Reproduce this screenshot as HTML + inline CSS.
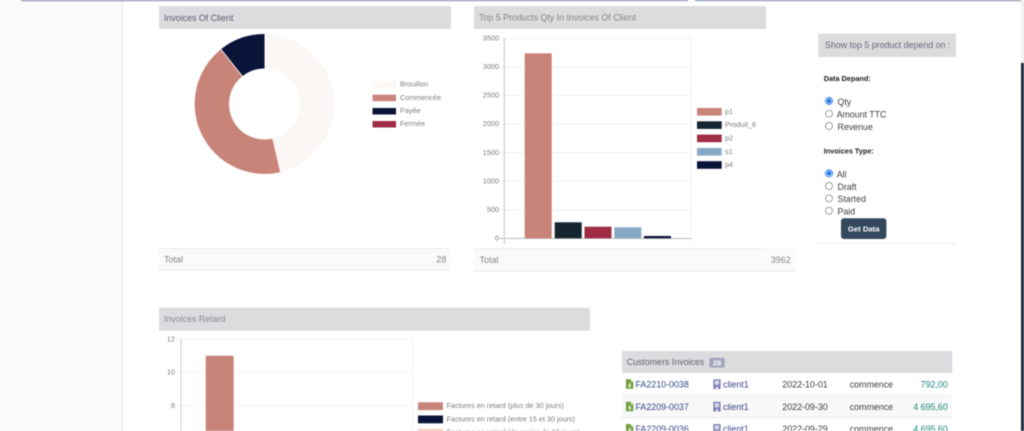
<!DOCTYPE html>
<html lang="en">
<head>
<meta charset="utf-8">
<title>Invoices Of Client</title>
<style>
html,body{margin:0;padding:0;width:1024px;height:431px;overflow:hidden;background:#fff}
svg{display:block;position:absolute;left:0;top:0;filter:blur(.4px)}
text{font-family:"Liberation Sans",sans-serif}
.h{font-size:8.85px;fill:#64647a}
.l{font-size:7.25px;fill:#7c7c7c}
.a{font-size:7.3px;fill:#7c7c7c;text-anchor:end}
.t{font-size:9px;fill:#858585}
.b{font-size:7.3px;font-weight:bold;fill:#1c1c1c}
.r{font-size:8.8px;fill:#3c3c3c}
.c{font-size:8.9px;fill:#3c3c3c}
.k{font-size:8.9px;fill:#3a4588}
.m{font-size:8.9px;fill:#1a8678;text-anchor:end}
</style>
</head>
<body>
<svg width="1024" height="431" viewBox="0 0 1024 431" xmlns="http://www.w3.org/2000/svg">
<defs>
<g id="f"><path d="M0 0h4.6l2.7 2.7v6.8H0z" fill="#6f9e3f"/><path d="M4.6 0v2.7h2.7z" fill="#b8d29a"/><rect x="2.6" y="4" width="2.2" height="4" fill="#dfeccd"/></g>
<g id="d"><path d="M0 0h7.3v9.7H0z" fill="#7f7fb5"/><path d="M1.5 1.3h4.3v4.2H1.5z" fill="#d9d9ec"/><rect x="2.7" y="7.2" width="1.9" height="2.5" fill="#e6e6f2"/></g>
</defs>

<!-- page chrome -->
<rect x="0" y="0" width="122" height="431" fill="#fbfbfb"/>
<rect x="122" y="0" width="1" height="431" fill="#e6e6e6"/>
<rect x="21" y="0" width="667" height="1.2" fill="#8a94ae"/>
<rect x="695" y="0" width="327" height="1.2" fill="#8a94ae"/>
<rect x="1021" y="0" width="3" height="63" fill="#f1f1f1"/>
<rect x="1021" y="63" width="3" height="368" fill="#1e2a3a"/>

<!-- panel 1 -->
<rect x="159" y="6" width="292" height="23" fill="#dcdcdf"/>
<text x="164" y="21" class="h" style="fill:#5c5c74">Invoices Of Client</text>
<path d="M264.5 34A70 70 0 0 1 280.1 172.2L272.4 138.6A35.5 35.5 0 0 0 264.5 68.5Z" fill="#fbf7f4"/>
<path d="M280.1 172.2A70 70 0 0 1 220.9 49.3L242.4 76.2A35.5 35.5 0 0 0 272.4 138.6Z" fill="#c9847a"/>
<path d="M220.9 49.3A70 70 0 0 1 264.5 34V68.5A35.5 35.5 0 0 0 242.4 76.2Z" fill="#0a1338"/>
<path d="M220.9 49.3L242.4 76.2" stroke="#fff" stroke-width=".8"/>
<rect x="372.5" y="81.5" width="23.5" height="6.5" fill="#fbf7f4"/>
<rect x="372.5" y="94.7" width="23.5" height="6.5" fill="#c9847a"/>
<rect x="372.5" y="108" width="23.5" height="6.5" fill="#0a1338"/>
<rect x="372.5" y="121" width="23.5" height="6.5" fill="#a02c44"/>
<text x="400" y="86.5" class="l">Brouillon</text>
<text x="400" y="99.8" class="l">Commencée</text>
<text x="400" y="112.8" class="l">Payée</text>
<text x="400" y="126" class="l">Fermée</text>
<rect x="159" y="248" width="292" height="22.5" fill="#fafafa"/>
<rect x="159" y="248" width="292" height=".8" fill="#e6e6e6"/>
<rect x="159" y="270" width="292" height=".8" fill="#e6e6e6"/>
<text x="164" y="262.5" class="t">Total</text>
<text x="446.5" y="262.5" class="t" text-anchor="end">28</text>

<!-- panel 2 -->
<rect x="474" y="6" width="292" height="23" fill="#dcdcdd"/>
<text x="479" y="20.5" class="h" style="fill:#85858f">Top 5 Products Qty In Invoices Of Client</text>
<g stroke="#eeeeee" stroke-width=".8">
<path d="M499 38.4H691.3M499 67H691.3M499 95.5H691.3M499 124.1H691.3M499 152.7H691.3M499 181.2H691.3M499 209.8H691.3M691.3 38.4V244"/>
</g>
<path d="M504.3 38V244M500 238.5H691.5" stroke="#bdbdbd" stroke-width=".9" fill="none"/>
<rect x="524.7" y="53.3" width="27" height="185" fill="#c9847a"/>
<rect x="554.7" y="222.3" width="27" height="16" fill="#16252f"/>
<rect x="584.5" y="226.7" width="27" height="11.6" fill="#a02c44"/>
<rect x="614.3" y="227.3" width="27" height="11" fill="#87a8c4"/>
<rect x="644" y="236" width="27" height="2.3" fill="#0a1338"/>
<text x="499" y="40.5" class="a">3500</text>
<text x="499" y="69" class="a">3000</text>
<text x="499" y="97.6" class="a">2500</text>
<text x="499" y="126.2" class="a">2000</text>
<text x="499" y="154.8" class="a">1500</text>
<text x="499" y="183.3" class="a">1000</text>
<text x="499" y="211.9" class="a">500</text>
<text x="499" y="240.5" class="a">0</text>
<rect x="697" y="108" width="24.7" height="7.6" fill="#c9847a"/>
<rect x="697" y="121.3" width="24.7" height="7.6" fill="#16252f"/>
<rect x="697" y="134.6" width="24.7" height="7.6" fill="#a02c44"/>
<rect x="697" y="148" width="24.7" height="7.6" fill="#87a8c4"/>
<rect x="697" y="161.2" width="24.7" height="7.6" fill="#0a1338"/>
<text x="725" y="114" class="l">p1</text>
<text x="725" y="127" class="l">Produit_6</text>
<text x="725" y="140.5" class="l">p2</text>
<text x="725" y="154" class="l">s1</text>
<text x="725" y="167" class="l">p4</text>
<rect x="474" y="248" width="322" height="23.5" fill="#fafafa"/>
<rect x="474" y="248" width="292" height=".8" fill="#ececec"/>
<rect x="474" y="271" width="322" height=".8" fill="#e6e6e6"/>
<text x="479.5" y="263" class="t">Total</text>
<text x="790.8" y="263" class="t" text-anchor="end">3962</text>

<!-- panel 3 -->
<rect x="818.3" y="33.5" width="137.7" height="23.5" fill="#dcdcdd"/>
<text x="825" y="48" class="h">Show top 5 product depend on :</text>
<text x="823.7" y="81" class="b">Data Depand:</text>
<g fill="#fff" stroke="#767676" stroke-width=".7">
<circle cx="829" cy="113.7" r="3.5"/><circle cx="829" cy="126" r="3.5"/>
<circle cx="829" cy="186" r="3.5"/><circle cx="829" cy="198.3" r="3.5"/><circle cx="829" cy="210.7" r="3.5"/>
</g>
<g fill="#fff" stroke="#1a73e8" stroke-width=".9">
<circle cx="829" cy="101" r="3.5"/><circle cx="829" cy="173.3" r="3.5"/>
</g>
<circle cx="829" cy="101" r="2.3" fill="#1a73e8"/><circle cx="829" cy="173.3" r="2.3" fill="#1a73e8"/>
<text x="837.5" y="105" class="r">Qty</text>
<text x="836.7" y="117.5" class="r">Amount TTC</text>
<text x="837.5" y="130" class="r">Revenue</text>
<text x="823.7" y="153.5" class="b">Invoices Type:</text>
<text x="836.7" y="177.5" class="r">All</text>
<text x="837.5" y="189.8" class="r">Draft</text>
<text x="837.5" y="202" class="r">Started</text>
<text x="837.5" y="214.5" class="r">Paid</text>
<rect x="841" y="218.3" width="45.4" height="20.7" rx="3" fill="#34495e"/>
<text x="863.7" y="231.5" text-anchor="middle" style="font-size:7.7px;font-weight:bold;fill:#fff">Get Data</text>
<rect x="818.3" y="243" width="137.7" height=".8" fill="#e6e6e6"/>

<!-- panel 4 -->
<rect x="159" y="307.7" width="431" height="23" fill="#dcdcdf"/>
<text x="164" y="321.8" class="h" style="fill:#85858f">Invoices Retard</text>
<g stroke="#eeeeee" stroke-width=".8">
<path d="M176.5 339.2H412.7M176.5 372.4H412.7M176.5 405.6H412.7M412.7 339.2V431"/>
</g>
<path d="M181 339V431" stroke="#c8c8c8" stroke-width=".9"/>
<rect x="205.7" y="355.7" width="28" height="75.3" fill="#c9847a"/>
<text x="175" y="341.5" class="a">12</text>
<text x="175" y="374.7" class="a">10</text>
<text x="175" y="408" class="a">8</text>
<rect x="418" y="402.3" width="25" height="7.8" fill="#c9847a"/>
<rect x="418" y="415.5" width="25" height="7.8" fill="#0a1338"/>
<rect x="418" y="429" width="25" height="2" fill="#f5c9b5"/>
<text x="446.5" y="408" class="l">Factures en retard (plus de 30 jours)</text>
<text x="446.5" y="421.3" class="l">Factures en retard (entre 15 et 30 jours)</text>
<text x="446.5" y="434.5" class="l">Factures en retard (de moins de 15 jours)</text>

<!-- table -->
<rect x="622" y="351" width="330.3" height="22" fill="#dcdcdf"/>
<text x="626.7" y="365" class="h" style="fill:#5f5f6c">Customers Invoices</text>
<rect x="709.3" y="357.7" width="15.5" height="10" rx="2" fill="#a5a5bd"/>
<text x="717" y="365.5" text-anchor="middle" style="font-size:7.5px;font-weight:bold;fill:#fff">28</text>
<rect x="622" y="395" width="330.3" height="22.5" fill="#f8f8f8"/>
<rect x="622" y="395" width="330.3" height=".7" fill="#e8e8e8"/>
<rect x="622" y="417.3" width="330.3" height=".7" fill="#e8e8e8"/>

<use href="#f" x="626" y="379.3"/>
<text x="635.5" y="387.3" class="k">FA2210-0038</text>
<use href="#d" x="713.3" y="379.3"/>
<text x="723" y="387.3" class="k">client1</text>
<text x="782.3" y="387.3" class="c">2022-10-01</text>
<text x="849.7" y="387.3" class="c">commence</text>
<text x="947.8" y="387.3" class="m">792,00</text>

<use href="#f" x="626" y="401.8"/>
<text x="635.5" y="409.8" class="k">FA2209-0037</text>
<use href="#d" x="713.3" y="401.8"/>
<text x="723" y="409.8" class="k">client1</text>
<text x="782.3" y="409.8" class="c">2022-09-30</text>
<text x="849.7" y="409.8" class="c">commence</text>
<text x="947.8" y="409.8" class="m">4 695,60</text>

<use href="#f" x="626" y="424"/>
<text x="635.5" y="431.8" class="k">FA2209-0036</text>
<use href="#d" x="713.3" y="424"/>
<text x="723" y="431.8" class="k">client1</text>
<text x="782.3" y="431.8" class="c">2022-09-29</text>
<text x="849.7" y="431.8" class="c">commence</text>
<text x="947.8" y="431.8" class="m">4 695,60</text>
</svg>
</body>
</html>
